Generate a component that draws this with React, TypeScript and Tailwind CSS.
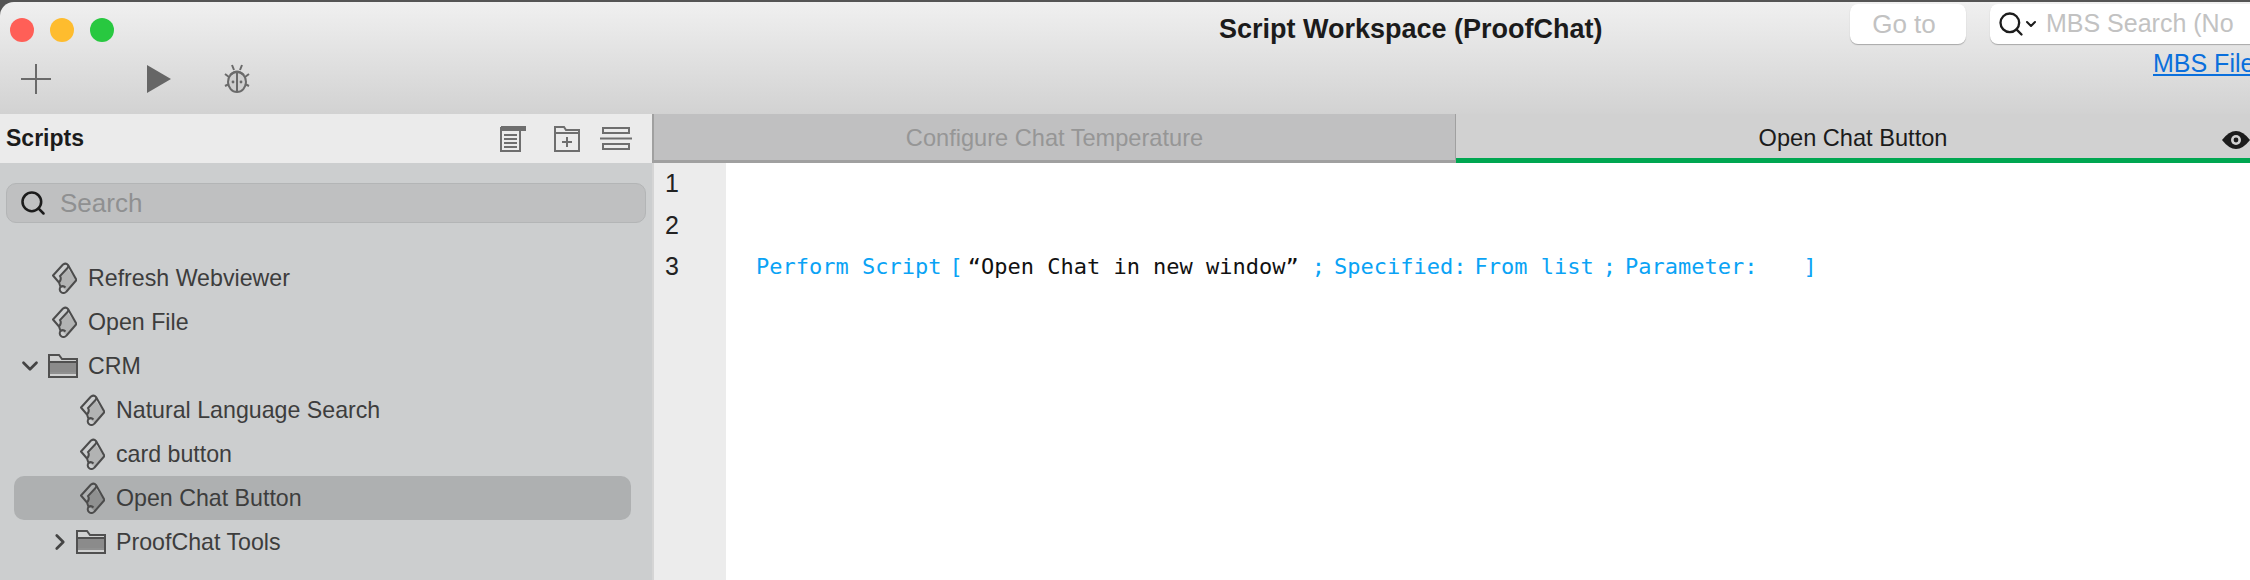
import React from 'react'
import { ChevronDown, ChevronRight, Search } from 'lucide-react'

const ScrollIcon: React.FC<{ selected?: boolean }> = ({ selected }) => (
  <svg width="25" height="32" viewBox="0 0 25 32" className="shrink-0">
    <path d="M8 14 L15 6 L24.5 18 L14.5 29 L8.5 24 L7 20 Z" fill={selected ? '#8f9090' : '#b2b3b3'} />
    <path
      d="M1 13.5 L11 2.5 Q14 0.5 16 3 L24.5 18 L14.5 29.5 A3.6 3.6 0 1 1 8.5 25 L7 20.5 L1 13.5 Z"
      fill="none"
      stroke="#4c4c4c"
      strokeWidth="2"
      strokeLinejoin="round"
    />
    <path d="M7 20.5 Q10 17 8 14 L15.5 6 Q17 4.5 16 3 M8.5 25 Q11 23 13.5 25.5" fill="none" stroke="#4c4c4c" strokeWidth="2" />
  </svg>
)

const FolderIcon: React.FC = () => (
  <svg width="30" height="24" viewBox="0 0 30 24" className="shrink-0">
    <path d="M1 23 V1 H11 L14 5 H29 V23 Z" fill="#d0d1d1" stroke="#505050" strokeWidth="2" />
    <rect x="2" y="9" width="26" height="9" fill="#8b8b8b" />
    <path d="M1 8 H29" stroke="#505050" strokeWidth="2" />
    <path d="M2 19 H28" stroke="#505050" strokeWidth="1" />
  </svg>
)

const BugIcon: React.FC = () => (
  <svg width="26" height="30" viewBox="0 0 26 30" fill="none" stroke="#6a6a6a" strokeWidth="2" className="shrink-0">
    <ellipse cx="13" cy="18" rx="9" ry="10" fill="#cfcfcf" />
    <path d="M13 8 V28 M6 11 Q13 4 20 11" />
    <path d="M8 1 L10 6 M18 1 L16 6 M1 10 L5 13 M25 10 L21 13 M1 22 L5 20 M25 22 L21 20" />
    <circle cx="9" cy="18" r="1.4" fill="#6a6a6a" stroke="none" />
    <circle cx="17" cy="18" r="1.4" fill="#6a6a6a" stroke="none" />
  </svg>
)

const NotesIcon: React.FC = () => (
  <svg width="26" height="26" viewBox="0 0 26 26" fill="none" stroke="#6e6e6e" strokeWidth="2">
    <path d="M1 2 H20 V25 H1 Z" />
    <rect x="1" y="0" width="25" height="5" fill="#6e6e6e" stroke="none" />
    <path d="M4 9 H17 M4 13 H17 M4 17 H17 M4 21 H17" />
  </svg>
)

const NewFolderIcon: React.FC = () => (
  <svg width="26" height="26" viewBox="0 0 26 26" fill="none" stroke="#6e6e6e" strokeWidth="2">
    <path d="M1 25 V1 H10 L12 4 H25 V25 Z M1 7 H25" />
    <path d="M13 11 V21 M8 16 H18" />
  </svg>
)

const RowsIcon: React.FC = () => (
  <svg width="32" height="24" viewBox="0 0 32 24" fill="none" stroke="#6e6e6e" strokeWidth="2">
    <rect x="3" y="1" width="26" height="5" />
    <path d="M0 11.5 H32" />
    <rect x="3" y="17" width="26" height="5" />
  </svg>
)

const EyeIcon: React.FC = () => (
  <svg width="28" height="18" viewBox="0 0 28 18" className="shrink-0">
    <path d="M0 9 Q14 -9 28 9 Q14 27 0 9 Z" fill="#1c1c1c" />
    <circle cx="14" cy="9" r="5" fill="#d1d1d1" />
    <circle cx="14" cy="9" r="2.4" fill="#1c1c1c" />
  </svg>
)

const Toolbar: React.FC = () => (
  <div className="bg-[#555555] pt-[2px]">
    <div className="h-[112px] flex rounded-tl-[14px] bg-gradient-to-b from-[#f0f0f0] to-[#d2d2d2]">
      <div className="w-[1219px] shrink-0 pl-[10px] pt-[16px]">
        <div className="flex gap-[16px]">
          <span className="size-[24px] rounded-full bg-[#ff5f57]" />
          <span className="size-[24px] rounded-full bg-[#febc2e]" />
          <span className="size-[24px] rounded-full bg-[#28c840]" />
        </div>
        <div className="flex items-center mt-[22px] h-[30px]">
          <svg width="30" height="30" viewBox="0 0 30 30" stroke="#6a6a6a" strokeWidth="2" className="ml-[11px]">
            <path d="M15 0 V30 M0 15 H30" />
          </svg>
          <svg width="24" height="28" viewBox="0 0 24 28" className="ml-[96px]">
            <path d="M0 0 L24 14 L0 28 Z" fill="#666666" />
          </svg>
          <div className="ml-[53px]">
            <BugIcon />
          </div>
        </div>
      </div>
      <div className="w-[631px] shrink-0 pt-[11px] text-[27px] leading-[32px] font-bold text-[#1b1b1b] whitespace-nowrap">
        Script Workspace (ProofChat)
      </div>
      <div className="flex-1 min-w-0 pt-[2px]">
        <div className="flex">
          <div className="w-[116px] h-[40px] shrink-0 flex items-center justify-center pr-[8px] rounded-[8px] bg-white shadow-[0_1px_1px_#a8a8a8] text-[26px] text-[#c2c2c2]">
            Go to
          </div>
          <div className="ml-[24px] w-[400px] h-[40px] shrink-0 flex items-center rounded-[8px] bg-white shadow-[0_1px_1px_#a8a8a8]">
            <Search size={28} strokeWidth={2} color="#1c1c1c" className="ml-[7px]" />
            <ChevronDown size={16} strokeWidth={3} color="#1c1c1c" className="-ml-[2px]" />
            <span className="ml-[7px] text-[25px] text-[#c2c2c2] whitespace-nowrap">MBS Search (No</span>
          </div>
        </div>
        <a className="block ml-[303px] mt-[4px] text-[25px] leading-[30px] text-[#0a6fdc] underline whitespace-nowrap">
          MBS File
        </a>
      </div>
    </div>
  </div>
)

type Row = { label: string; kind: 'script' | 'folder'; indent: number; open?: boolean; selected?: boolean }

const ROWS: Row[] = [
  { label: 'Refresh Webviewer', kind: 'script', indent: 52 },
  { label: 'Open File', kind: 'script', indent: 52 },
  { label: 'CRM', kind: 'folder', indent: 48, open: true },
  { label: 'Natural Language Search', kind: 'script', indent: 80 },
  { label: 'card button', kind: 'script', indent: 80 },
  { label: 'Open Chat Button', kind: 'script', indent: 80, selected: true },
  { label: 'ProofChat Tools', kind: 'folder', indent: 76, open: false },
]

const Sidebar: React.FC = () => (
  <div className="w-[652px] shrink-0 flex flex-col">
    <div className="h-[49px] bg-[#ebebeb] flex items-center pl-[6px]">
      <span className="text-[23px] font-bold text-[#1b1b1b]">Scripts</span>
      <div className="ml-auto flex items-center">
        <NotesIcon />
        <div className="ml-[28px]">
          <NewFolderIcon />
        </div>
        <div className="ml-[20px] mr-[20px]">
          <RowsIcon />
        </div>
      </div>
    </div>
    <div className="flex-1 bg-[#cccecf] pt-[20px]">
      <div className="mx-[6px] h-[40px] flex items-center rounded-[10px] bg-[#bfc0c1] border border-[#b3b5b6]">
        <Search size={28} strokeWidth={2.2} color="#1c1c1c" className="ml-[12px]" />
        <span className="ml-[13px] text-[26px] text-[#8f9091]">Search</span>
      </div>
      <div className="mt-[33px]">
        {ROWS.map((row) => (
          <div
            key={row.label}
            className={`relative h-[44px] flex items-center text-[23.2px] text-[#3d3d3d] whitespace-nowrap ${
              row.selected ? 'bg-[#aeb0b1] rounded-[10px] ml-[14px] mr-[21px]' : ''
            }`}
          >
            {row.kind === 'folder' && row.open && (
              <ChevronDown size={26} strokeWidth={2.5} color="#444" className="absolute left-[17px]" />
            )}
            {row.kind === 'folder' && !row.open && (
              <ChevronRight size={26} strokeWidth={2.5} color="#444" className="absolute left-[47px]" />
            )}
            <div className={`flex items-center ${row.selected ? 'ml-[66px]' : ''}`} style={row.selected ? undefined : { marginLeft: row.indent }}>
              {row.kind === 'script' ? <ScrollIcon selected={row.selected} /> : <FolderIcon />}
              <span className={row.kind === 'script' ? 'ml-[11px]' : 'ml-[10px]'}>{row.label}</span>
            </div>
          </div>
        ))}
      </div>
    </div>
  </div>
)

const Editor: React.FC = () => (
  <div className="flex-1 min-w-0 flex flex-col">
    <div className="h-[49px] flex text-[23.6px]">
      <div className="w-[804px] shrink-0 flex items-center justify-center pt-[3px] bg-[#c0c0c1] border-l-2 border-b-[3px] border-r border-[#a0a0a0] text-[#969696]">
        Configure Chat Temperature
      </div>
      <div className="relative flex-1 flex items-center justify-center pt-[5px] bg-[#d1d1d1] border-b-[5px] border-[#00a651] text-[#1b1b1b]">
        Open Chat Button
        <div className="absolute right-0 top-[17px]">
          <EyeIcon />
        </div>
      </div>
    </div>
    <div className="flex-1 flex bg-white">
      <div className="w-[74px] bg-[#ececec] border-l-2 border-[#d5d5d5] pl-[11px] text-[25px] leading-[41.5px] text-[#222222]">
        <div>1</div>
        <div>2</div>
        <div>3</div>
      </div>
      <div className="flex-1 pl-[30px] pt-[83px] text-[22px] leading-[41.5px] text-[#0aa3f5] whitespace-pre font-['DejaVu_Sans_Mono',monospace] flex">
        <span>Perform Script</span>
        <span className="ml-[8px]">[</span>
        <span className="ml-[5px] text-[#111111]">“Open Chat in new window”</span>
        <span className="ml-[13px]">;</span>
        <span className="ml-[9px]">Specified:</span>
        <span className="ml-[8px]">From list</span>
        <span className="ml-[9px]">;</span>
        <span className="ml-[9px]">Parameter:</span>
        <span className="ml-[46px]">]</span>
      </div>
    </div>
  </div>
)

export default function App() {
  return (
    <div className="w-[2250px] h-[580px] overflow-hidden flex flex-col bg-white font-['Liberation_Sans',Arial,sans-serif]">
      <Toolbar />
      <div className="flex-1 min-h-0 flex">
        <Sidebar />
        <Editor />
      </div>
    </div>
  )
}
